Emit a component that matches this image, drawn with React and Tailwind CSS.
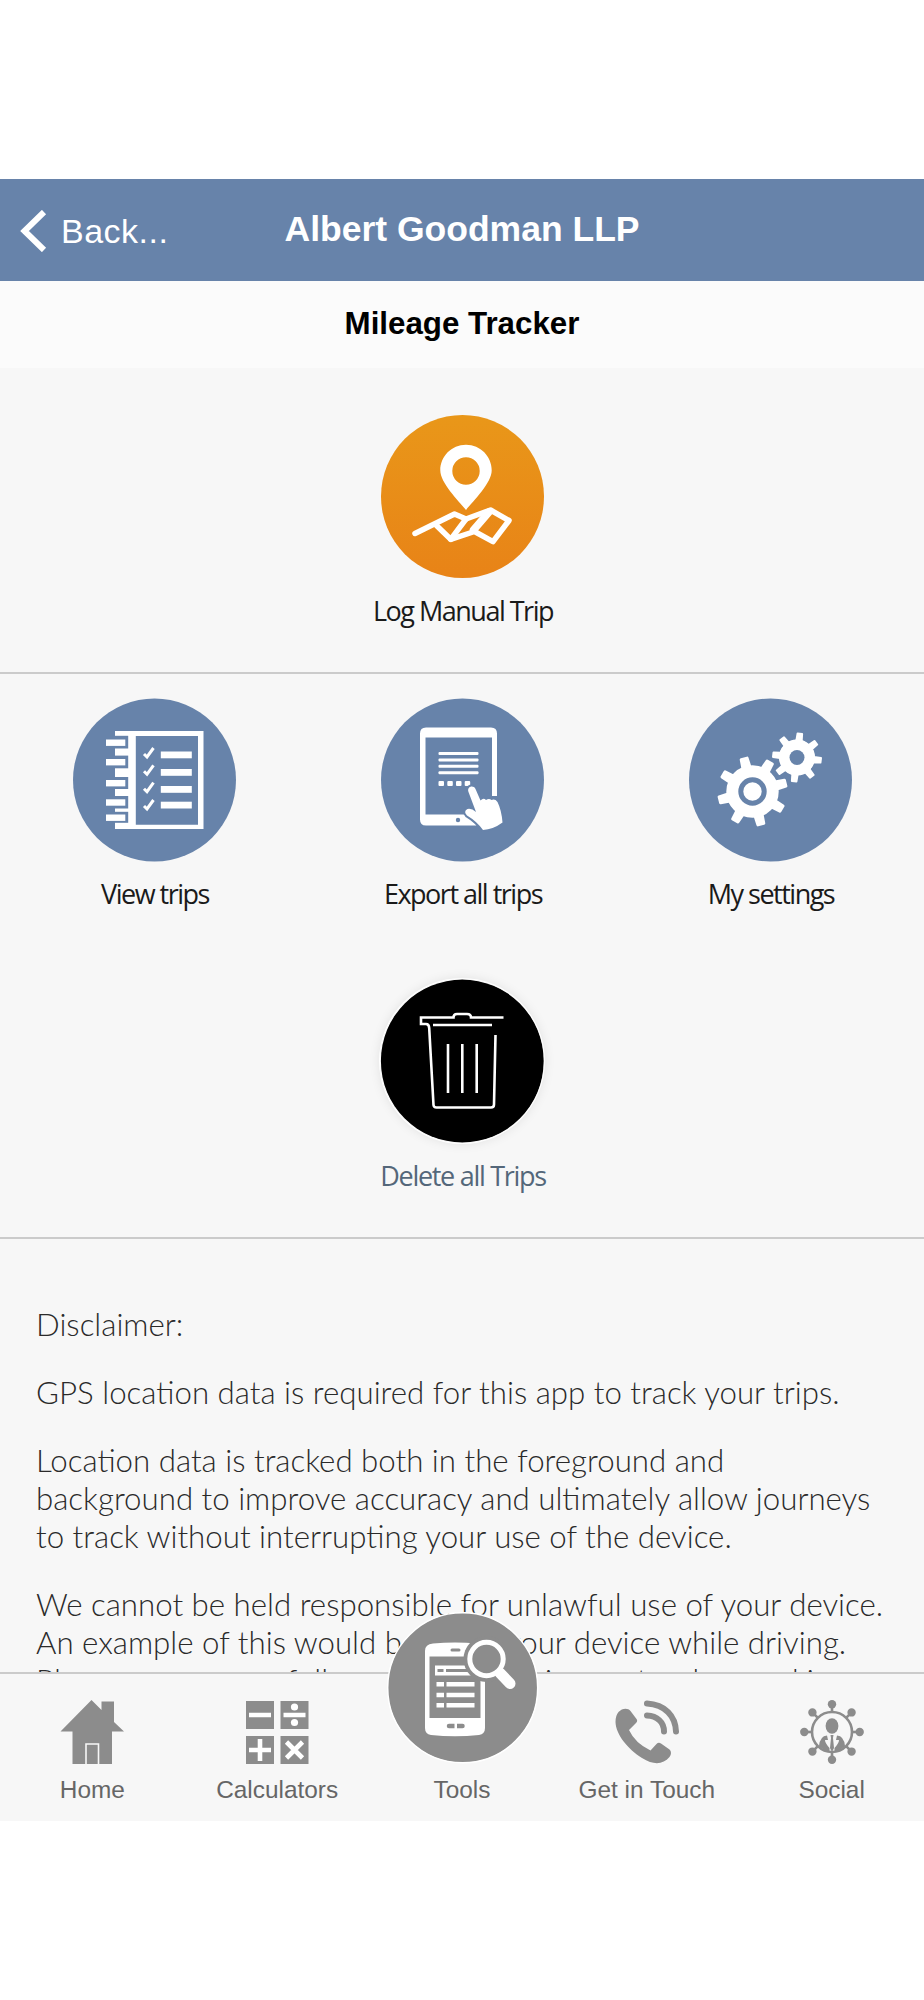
const iconBlue = "#6783aa";

// outline of the teeth only, the body of the gear is a plain circle
function gearPath(cx, cy, rIn, rOut, teeth, start, w) {
  let d = "";
  for (let i = 0; i < teeth; i++) {
    const a = start + (i * 2 * Math.PI) / teeth;
    const pt = (r, off) =>
      `${(cx + r * Math.cos(a + off)).toFixed(2)} ${(cy + r * Math.sin(a + off)).toFixed(2)}`;
    d += `${i === 0 ? "M" : "L"}${pt(rIn, -w * 1.65)} L${pt(rOut, -w)} L${pt(rOut, w)} L${pt(rIn, w * 1.65)} `;
  }
  return d + "Z";
}

const LogTripIcon = () => (
  <svg width="164" height="164" viewBox="-0.5 0.5 164 164">
    <defs>
      <linearGradient id="orange" x1="0" y1="0" x2="0" y2="1">
        <stop offset="0" stopColor="#e99719" />
        <stop offset="1" stopColor="#e88317" />
      </linearGradient>
    </defs>
    <circle cx="82" cy="82" r="81.5" fill="url(#orange)" />
    <path
      fill="#fff"
      fillRule="evenodd"
      d="M85.500 95.500C77.500 86 59.800 68 59.800 56C59.800 42 71 30.300 85.500 30.300S111.200 42 111.200 56C111.200 68 93.500 86 85.500 95.500ZM85.500 42.800a13.700 13.700 0 1 0 0 27.400a13.700 13.700 0 1 0 0-27.400Z"
    />
    <g fill="none" stroke="#fff" strokeWidth="5.500" strokeLinejoin="round" strokeLinecap="round">
      <path d="M34.500 119L74 99.500L85.500 104.500L110 95.500L128.500 106L112.500 127.200L94 117L70.200 124.800L56.500 111.500" />
      <path d="M85.500 104.500L70.200 124.800" />
      <path d="M108.500 97.500L93 115.500" strokeWidth="7.500" />
    </g>
  </svg>
);

const ViewTripsIcon = () => (
  <svg width="164" height="164" viewBox="-0.5 0 164 164">
    <circle cx="82" cy="82" r="81.500" fill={iconBlue} />
    <path fill="#fff" fillRule="evenodd" d="M42.500 33H131V131H42.500ZM63.300 38V126.700H125.500V38Z" />
    {[
      { ring: 41.5, notch: 37.8, height: 12.7 },
      { ring: 61, notch: 57.6, height: 12.7 },
      { ring: 82, notch: 79, height: 12 },
      { ring: 101.3, notch: 98, height: 12.5 },
      { ring: 116.5, notch: 113.8, height: 11 },
    ].map(({ ring, notch, height }) => (
      <g key={ring}>
        <rect x="40" y={notch} width="15.700" height={height} fill={iconBlue} />
        <rect x="33.500" y={ring} width="19.300" height="6.400" fill="#fff" />
      </g>
    ))}
    {[53.5, 71, 88, 103.7].map((y) => (
      <rect key={y} x="88.300" y={y} width="31" height="6.800" fill="#fff" />
    ))}
    {[50, 67.3, 84.7, 102].map((y) => (
      <path key={y} d={`M71.500 ${y + 6}L74.500 ${y + 9}L81 ${y}`} fill="none" stroke="#fff" strokeWidth="3" />
    ))}
  </svg>
);

const ExportIcon = () => (
  <svg width="164" height="164" viewBox="-0.5 0 164 164">
    <circle cx="82" cy="82" r="81.500" fill={iconBlue} />
    <path
      fill="#fff"
      fillRule="evenodd"
      d="M45.500 29.500H110.500Q116.500 29.500 116.500 35.500V98H111.500V39.500H45V116.500H86L96 127.500H45.500Q39.500 127.500 39.500 121.500V35.500Q39.500 29.500 45.500 29.500Z"
    />
    <circle cx="77.500" cy="122" r="2.200" fill={iconBlue} />
    {[55.5, 62, 68.3, 74.8].map((y) => (
      <rect key={y} x="58" y={y - 1.5} width="40" height="3" rx="1" fill="#fff" />
    ))}
    {[58, 66.8, 75.5, 84.2].map((x) => (
      <rect key={x} x={x} y="83" width="5.500" height="5" rx="1" fill="#fff" />
    ))}
    <path
      fill="#fff"
      stroke={iconBlue}
      strokeWidth="4"
      strokeLinejoin="round"
      paintOrder="stroke"
      d="M88 94C86 88.500 93 86.500 95 91L100 102.500Q103 99.500 105.500 102Q108.500 100 111 102Q114.500 100.500 117 104Q121 112 122 124.500Q112.500 131.500 102.500 132Q96.500 123.500 86.500 117.500Q82.500 113.500 87 111Q91 110 95.500 114Z"
    />
  </svg>
);

const SettingsIcon = () => (
  <svg width="164" height="164" viewBox="-0.5 0 164 164">
    <circle cx="82" cy="82" r="81.500" fill={iconBlue} />
    <g fill="#fff" stroke="#fff" strokeWidth="3" strokeLinejoin="round">
      <path d={gearPath(64, 93.5, 24.5, 33.8, 8, -0.25, 0.09)} />
      <circle cx="64" cy="93.500" r="24.700" />
    </g>
    <g fill="#fff" stroke="#fff" strokeWidth="2" strokeLinejoin="round">
      <path d={gearPath(108.5, 59.5, 17, 24, 8, 0.12, 0.095)} />
      <circle cx="108.500" cy="59.500" r="17" />
    </g>
    <circle cx="64" cy="93.500" r="11.700" fill="#fff" stroke={iconBlue} strokeWidth="5" />
    <circle cx="108.500" cy="59.500" r="7.500" fill={iconBlue} />
  </svg>
);

const TrashIcon = () => (
  <svg
    className="rounded-full shadow-[0_0_0_1px_#fff,0_0_12px_rgba(0,0,0,0.1)]"
    width="164"
    height="164"
    viewBox="0 0 164 164"
  >
    <circle cx="82" cy="82" r="82" fill="#fff" />
    <circle cx="82.300" cy="82" r="81.400" fill="#000" />
    <g fill="none" stroke="#fff" strokeWidth="2.600">
      <path d="M123.500 38.500H91Q91 35 87 35H77Q73.500 35 73.500 38.500H41V45H46Q49 45 49.200 49L53.500 126Q53.700 128.500 56.500 128.500H111Q114 128.500 114 125.500L115.500 56" />
      <path d="M53 46H112M68 65V114M82.300 65V114M96.700 65V114" />
    </g>
  </svg>
);

const HomeIcon = () => (
  <svg width="64" height="64" viewBox="0 0 64 64" fill="#8c8c8c">
    <path d="M31.500 0L41.500 10V1.500H54V22L64 31.500H52V64H12.500V31.500H0.500Z" />
    <path d="M26 64V44H38.500V64" fill="none" stroke="#f7f7f7" strokeWidth="1.600" />
  </svg>
);

const CalculatorsIcon = () => (
  <svg width="64" height="64" viewBox="0 0 64 64" fill="#8c8c8c">
    <path d="M1 1h28v28H1zM35.500 1h28v28h-28zM1 36h28v28H1zM35.500 36h28v28h-28z" />
    <g stroke="#fff" strokeWidth="4.600">
      <path d="M4 15H26M38.500 15H60.500M4 50H26M15 39V61M41.500 42L57.500 58M57.500 42L41.500 58" />
    </g>
    <circle cx="49.500" cy="7" r="3.600" fill="#fff" />
    <circle cx="49.500" cy="22.500" r="3.600" fill="#fff" />
  </svg>
);

const PhoneIcon = () => (
  <svg width="64" height="64" viewBox="0 0 64 64" fill="#8c8c8c">
    <path d="M3.500 12C7 8 13 7.500 15.500 11L21.500 19Q23 21 21 23L14 30Q20 43 35.500 50.500L41.500 44Q43.500 42 46 43.500L54.500 49.500Q57.500 52.500 54.500 57C48 64.500 39 65.500 27 58C13 49 1 35 0.500 22Q0.500 15.500 3.500 12Z" />
    <g fill="none" stroke="#8c8c8c" strokeWidth="6" strokeLinecap="round">
      <path d="M32 3.500C50 4.500 60.500 16 61 31.500" />
      <path d="M32 15.500C42 16 49 22 49 31.500" />
    </g>
  </svg>
);

const SocialIcon = () => (
  <svg width="64" height="64" viewBox="0 0 64 64" fill="#8c8c8c">
    <circle cx="32" cy="32" r="20" fill="none" stroke="#8c8c8c" strokeWidth="2.600" />
    {[0, 45, 90, 135, 180, 225, 270, 315].map((deg) => (
      <g key={deg} transform={`rotate(${deg} 32 32)`}>
        <path d="M32 4V12" stroke="#8c8c8c" strokeWidth="2.600" />
        <circle cx="32" cy="4.300" r="4.200" />
      </g>
    ))}
    <ellipse cx="32" cy="26" rx="6.400" ry="7.800" />
    <path d="M27 35.500Q20 36 19 46Q25 51.500 29.500 52V48Q25 43 25 40H28ZM37 35.500Q44 36 45 46Q39 51.500 34.500 52V48Q39 43 39 40H36Z" />
    <path d="M30.500 35H33.500L33 38L34 48L32 52L30 48L31 38Z" />
  </svg>
);

const ToolsIcon = () => (
  <svg width="152" height="152" viewBox="-1 -1 152 152">
    <circle cx="74.700" cy="74.700" r="75" fill="#8c8c8c" stroke="#fff" strokeWidth="1.500" />
    <path
      fill="#fff"
      fillRule="evenodd"
      d="M45 30.500Q67 28.500 89 30.500Q97 31 97 38V115Q97 121 91 122Q67 124.500 43 122Q37 121 37 115V38Q37 31 45 30.500ZM41.500 43.500V105H92.500V43.500Z"
    />
    <path d="M47 52.500H85V62.500H47Z" fill="#fff" />
    <path d="M49.500 56H55.500V59H49.500ZM58 56H80V59H58Z" fill="#8c8c8c" />
    {[69, 79.7, 90].map((y) => (
      <path key={y} d={`M48.500 ${y}h7.500v4.500h-7.500zM58.500 ${y}h28v4.500h-28z`} fill="#fff" />
    ))}
    <rect x="62.500" y="35.500" width="10" height="3" rx="1.500" fill="#8c8c8c" />
    <path d="M61 110.800h5.500v4.500h-5.500a2.250 2.250 0 0 1 0-4.500ZM69 110.800h5.500a2.250 2.250 0 0 1 0 4.500H69Z" fill="#8c8c8c" />
    <circle cx="98.500" cy="46" r="23" fill="#8c8c8c" />
    <path d="M112 60L122 70.500" stroke="#fff" strokeWidth="11" strokeLinecap="round" />
    <circle cx="98.500" cy="46" r="16.700" fill="#8c8c8c" stroke="#fff" strokeWidth="5" />
  </svg>
);

const tripActions = [
  { label: "View trips", Icon: ViewTripsIcon },
  { label: "Export all trips", Icon: ExportIcon },
  { label: "My settings", Icon: SettingsIcon },
];

const navItems = [
  { label: "Home", Icon: HomeIcon },
  { label: "Calculators", Icon: CalculatorsIcon },
  { label: "Tools" },
  { label: "Get in Touch", Icon: PhoneIcon },
  { label: "Social", Icon: SocialIcon },
];

const Action = ({ label, Icon, className = "mt-[13px] text-[#1a1a1a] tracking-[-1.5px]" }) => (
  <button className="flex flex-col items-center">
    <Icon />
    <span className={`pl-[2px] font-['Open_Sans',sans-serif] text-[27px] leading-[38px] whitespace-nowrap ${className}`}>
      {label}
    </span>
  </button>
);

export default function App() {
  return (
    <div className="flex h-[2000px] w-[924px] flex-col overflow-hidden bg-white pt-[179px] font-['Liberation_Sans',sans-serif]">
      <header className="grid h-[102px] shrink-0 grid-cols-[1fr_auto_1fr] items-center bg-[#6783aa] text-white">
        <button className="flex items-center pt-[2px] pl-5">
          <svg width="27" height="42" viewBox="0 0 27 42" fill="none" stroke="#fff" strokeWidth="6">
            <path d="M24 2L4.500 21L24 40" />
          </svg>
          <span className="ml-[14px] text-[34px] leading-none tracking-[0.5px]">Back...</span>
        </button>
        <h1 className="text-center text-[35.5px] font-bold whitespace-nowrap">Albert Goodman LLP</h1>
      </header>

      <div className="flex h-[87px] shrink-0 items-center justify-center bg-[#fbfbfb]">
        <h2 className="text-[31.3px] font-bold text-black">Mileage Tracker</h2>
      </div>

      <main className="h-[1304px] shrink-0 overflow-hidden bg-[#f7f7f7]">
        <section className="flex h-[306px] justify-center border-b-2 border-[#cbcbcb] pt-[47px]">
          <Action label="Log Manual Trip" Icon={LogTripIcon} />
        </section>

        <section className="h-[565px] border-b-2 border-[#cbcbcb] pt-6">
          <div className="grid grid-cols-3">
            {tripActions.map((action) => (
              <Action key={action.label} {...action} />
            ))}
          </div>
          <div className="mt-[66px] flex justify-center">
            <Action
              label="Delete all Trips"
              Icon={TrashIcon}
              className="mt-[14px] text-[#54677a] tracking-[-1.3px]"
            />
          </div>
        </section>

        <section className="space-y-[30px] pt-[66px] pl-9 font-['Lato',sans-serif] text-[31.25px] leading-[38px] font-light whitespace-nowrap text-[#2a2a2a]">
          <p>Disclaimer:</p>
          <p>GPS location data is required for this app to track your trips.</p>
          <p>
            Location data is tracked both in the foreground and
            <br />
            background to improve accuracy and ultimately allow journeys
            <br />
            to track without interrupting your use of the device.
          </p>
          <p>
            We cannot be held responsible for unlawful use of your device.
            <br />
            An example of this would be using your device while driving.
            <br />
            Please ensure you follow all legal requirements when making
          </p>
        </section>
      </main>

      <nav className="relative grid h-[149px] shrink-0 grid-cols-5 border-t-2 border-[#cbcbcb] bg-[#f7f7f7] text-[24.4px] text-[#666]">
        {navItems.map(({ label, Icon }) => (
          <button key={label} className="flex flex-col items-center pt-[26px]">
            <div className="h-16">{Icon && <Icon />}</div>
            <span className="mt-[11px] leading-[30px] whitespace-nowrap">{label}</span>
          </button>
        ))}
        <div className="absolute -top-[62px] left-[387px]">
          <ToolsIcon />
        </div>
      </nav>
    </div>
  );
}
